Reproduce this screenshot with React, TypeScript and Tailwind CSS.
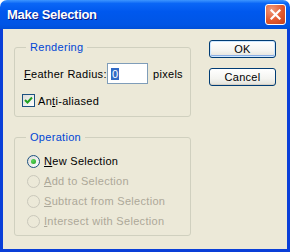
import React from "react";

const Radio = ({ checked, disabled, children }: { checked?: boolean; disabled?: boolean; children: React.ReactNode }) => (
    <div className="flex h-[20px] items-center pl-[12px]">
        <span
            className={`flex h-[13px] w-[13px] items-center justify-center rounded-full border ${
                disabled ? "border-[#CAC8BB] bg-[#ECE9D8]" : "border-[#1C5180] bg-[linear-gradient(135deg,#DCDCD7,#FFFFFF)]"
            }`}
        >
            {checked && <span className="h-[5px] w-[5px] rounded-full bg-[radial-gradient(circle_at_35%_35%,#5CD65C,#21A121)]" />}
        </span>
        <span className={`ml-[4px] ${disabled ? "text-[#ACA899]" : "text-black"}`}>{children}</span>
    </div>
);

const Button = ({ label, isDefault }: { label: string; isDefault?: boolean }) => (
    <button
        className={`flex h-[18px] w-[67px] items-center justify-center rounded-[3px] border border-[#003C74] bg-[linear-gradient(#FFFFFF,#F4F4F0_60%,#E3E2DA)] text-black ${
            isDefault ? "shadow-[inset_0_0_0_1px_#CEE7FF,inset_0_-1px_0_1px_#89ADE4]" : "shadow-[inset_0_-1px_0_#D6D0C5]"
        }`}
    >
        {label}
    </button>
);

export default function App() {
    return (
        <div className="flex h-[252px] w-[290px] flex-col bg-white font-['Liberation_Sans',Arial,sans-serif] text-[11px] leading-[12px]">
            {/* title bar */}
            <div className="flex h-[29px] items-center justify-between rounded-t-[7px] bg-[linear-gradient(#3D95FF,#0A66F6_12%,#0058EE_40%,#0055E5_85%,#004FD8)] pl-[7px] pr-[4px]">
                <span className="text-[13px] font-bold leading-none tracking-[-0.3px] text-white [text-shadow:1px_1px_#0A1883]">Make Selection</span>
                <div className="flex h-[21px] w-[21px] items-center justify-center rounded-[3px] border border-white bg-[radial-gradient(circle_at_30%_25%,#F09A7C,#E2592F_55%,#C4401A)]">
                    <svg width="11" height="11" viewBox="0 0 11 11">
                        <path d="M1.5 1.5 L9.5 9.5 M9.5 1.5 L1.5 9.5" stroke="white" strokeWidth="2.2" strokeLinecap="square" />
                    </svg>
                </div>
            </div>

            {/* body */}
            <div className="flex flex-1 border-x-[3px] border-b-[3px] border-[#0A3FD8] bg-[#ECE9D8] pl-[11px] pt-[11px] tracking-[0.3px]">
                <div className="flex w-[177px] flex-col pt-[1px]">
                    <fieldset className="rounded-[3px] border border-[#D0D0BF] pb-[9px]">
                        <legend className="ml-[11px] px-[4px] text-[#0046D5]">Rendering</legend>
                        <div className="mt-[10px] flex items-center pl-[9px]">
                            <span className="w-[83px]">
                                <span className="underline">F</span>eather Radius:
                            </span>
                            <div className="flex h-[21px] w-[41px] items-center border border-[#7F9DB9] bg-white pl-[3px]">
                                <span className="bg-[#316AC5] px-[1px] leading-[12px] text-white">0</span>
                            </div>
                            <span className="ml-[5px]">pixels</span>
                        </div>
                        <div className="mt-[10px] flex items-center pl-[7px]">
                            <span className="flex h-[13px] w-[13px] items-center justify-center border border-[#1C5180] bg-[linear-gradient(135deg,#DCDCD7,#FFFFFF)]">
                                <svg width="9" height="9" viewBox="0 0 9 9">
                                    <path d="M1 4 L3.5 6.5 L8 1.5" fill="none" stroke="#21A121" strokeWidth="2" />
                                </svg>
                            </span>
                            <span className="ml-[3px]">
                                An<span className="underline">t</span>i-aliased
                            </span>
                        </div>
                    </fieldset>

                    <fieldset className="mt-[14px] rounded-[3px] border border-[#D0D0BF] pb-[4px]">
                        <legend className="ml-[11px] px-[4px] text-[#0046D5]">Operation</legend>
                        <div className="mt-[8px] flex flex-col">
                            <Radio checked>
                                <span className="underline">N</span>ew Selection
                            </Radio>
                            <Radio disabled>
                                <span className="underline">A</span>dd to Selection
                            </Radio>
                            <Radio disabled>
                                <span className="underline">S</span>ubtract from Selection
                            </Radio>
                            <Radio disabled>
                                <span className="underline">I</span>ntersect with Selection
                            </Radio>
                        </div>
                    </fieldset>
                </div>

                <div className="ml-[18px] flex flex-col gap-[10px]">
                    <Button label="OK" isDefault />
                    <Button label="Cancel" />
                </div>
            </div>
        </div>
    );
}
